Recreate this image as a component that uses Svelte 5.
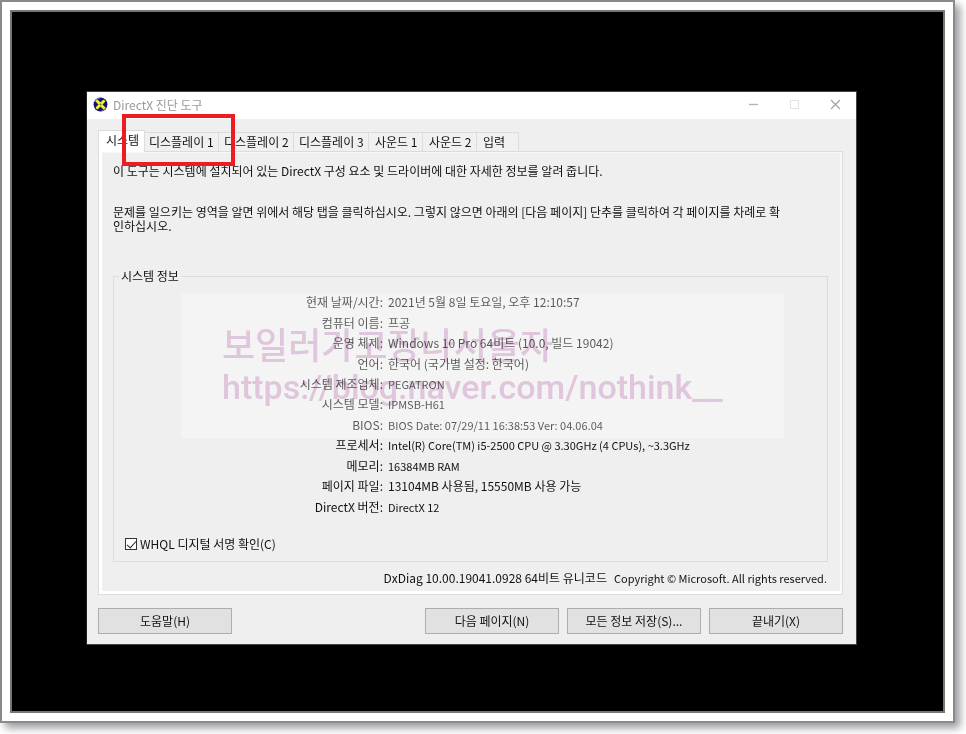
<script>
  const tabs = ['시스템', '디스플레이 1', '디스플레이 2', '디스플레이 3', '사운드 1', '사운드 2', '입력'];
  let active = $state(0);
  let whql = $state(true);
  const info = [
    ['현재 날짜/시간:', '2021년 5월 8일 토요일, 오후 12:10:57'],
    ['컴퓨터 이름:', '프공'],
    ['운영 체제:', 'Windows 10 Pro 64비트 (10.0, 빌드 19042)'],
    ['언어:', '한국어 (국가별 설정: 한국어)'],
    ['시스템 제조업체:', 'PEGATRON'],
    ['시스템 모델:', 'IPMSB-H61'],
    ['BIOS:', 'BIOS Date: 07/29/11 16:38:53 Ver: 04.06.04'],
    ['프로세서:', 'Intel(R) Core(TM) i5-2500 CPU @ 3.30GHz (4 CPUs), ~3.3GHz'],
    ['메모리:', '16384MB RAM'],
    ['페이지 파일:', '13104MB 사용됨, 15550MB 사용 가능'],
    ['DirectX 버전:', 'DirectX 12']
  ];
  const isLatin = (text) => !/[가-힣]/.test(text);
</script>

<div class="page">
  <div class="frame">
    <div class="desktop">
      <main class="window">
        <header class="titlebar">
          <svg class="logo" viewBox="0 0 16 16" aria-hidden="true">
            <circle cx="8" cy="8" r="7.4" fill="#10108c" />
            <path d="M2 5A7 7 0 0 1 7 1" stroke="#7f8fd8" stroke-width="1.2" fill="none" />
            <path d="M14 11A7 7 0 0 1 9 15" stroke="#6a6a9a" stroke-width="1.2" fill="none" />
            <path d="M4.6 4.6L11.4 11.4M11.4 4.6L4.6 11.4" stroke="#f5ee1c" stroke-width="3.2" stroke-linecap="round" />
            <circle cx="8" cy="8" r="1" fill="#77751c" />
          </svg>
          <h1>DirectX 진단 도구</h1>
          <div class="controls">
            <button aria-label="최소화"><svg viewBox="0 0 11 11"><path d="M1 5.5H10" stroke="#b4b4b4" stroke-width="1.4" /></svg></button>
            <button aria-label="최대화" disabled><svg viewBox="0 0 11 11"><path d="M1.5 1.5H9.500V9.500H1.500Z" stroke="#e2e2e2" fill="none" /></svg></button>
            <button aria-label="닫기"><svg viewBox="0 0 11 11"><path d="M1 1L10 10M10 1L1 10" stroke="#a0a0a0" stroke-width="1.1" /></svg></button>
          </div>
        </header>

        <div class="body">
          <div class="tabs" role="tablist">
            {#each tabs as tab, i}
              <button role="tab" aria-selected={i === active} class:active={i === active} onclick={() => (active = i)}>{tab}</button>
            {/each}
            <span class="marker"></span>
          </div>

          <section class="panel">
            <p class="intro">이 도구는 시스템에 설치되어 있는 DirectX 구성 요소 및 드라이버에 대한 자세한 정보를 알려 줍니다.</p>
            <p class="hint">문제를 일으키는 영역을 알면 위에서 해당 탭을 클릭하십시오. 그렇지 않으면 아래의 [다음 페이지] 단추를 클릭하여 각 페이지를 차례로 확인하십시오.</p>

            <fieldset>
              <legend>시스템 정보</legend>
              <dl>
                {#each info as [name, value]}
                  <dt>{name}</dt>
                  <dd class:latin={isLatin(value)}>{value}</dd>
                {/each}
              </dl>
              <label><input type="checkbox" bind:checked={whql} />WHQL 디지털 서명 확인(C)</label>
              <div class="veil"></div>
              <div class="watermark"><span>보일러가고장나서울자</span><span class="url">https://blog.naver.com/nothink__</span></div>
            </fieldset>

            <p class="version"><span>DxDiag 10.00.19041.0928 64비트 유니코드</span><span class="latin">Copyright © Microsoft. All rights reserved.</span></p>
          </section>

          <footer>
            <button class="help">도움말(H)</button>
            <button>다음 페이지(N)</button>
            <button>모든 정보 저장(S)...</button>
            <button>끝내기(X)</button>
          </footer>
        </div>
      </main>
    </div>
  </div>
</div>

<style>
  :global(body) {
    background: #fff;
  }
  .page {
    padding: 0 11px 12px 0;
    font: 12px/14px 'Noto Sans CJK KR', sans-serif;
    color: #111;
  }
  .page * {
    box-sizing: border-box;
  }
  .frame {
    border: 2px solid #8a8a8a;
    padding: 8px;
    background: #fff;
    box-shadow: 5px 5px 8px rgba(0, 0, 20, 0.4);
  }
  .desktop {
    border: 2px solid #777;
    background: #000;
    padding: 79px 86px 66px 74px;
  }
  .window {
    background: #efefef;
    border: 1px solid #444;
    border-left-color: #222;
  }
  .titlebar {
    display: flex;
    align-items: center;
    height: 27px;
    background: #fff;
    padding-left: 6px;
  }
  .logo {
    width: 15px;
    height: 15px;
    margin-bottom: 2px;
  }
  h1 {
    margin: 0 auto 2px 5px;
    font-size: 12px;
    font-weight: 400;
    color: #999;
  }
  button {
    font: inherit;
    color: inherit;
    border-radius: 0;
    padding: 0;
  }
  .controls {
    display: flex;
  }
  .controls button {
    width: 41px;
    height: 27px;
    padding-bottom: 2px;
    border: 0;
    background: none;
    display: grid;
    place-items: center;
  }
  .controls svg {
    width: 11px;
    height: 11px;
  }
  .body {
    padding: 11px 13px 10px 11px;
  }
  .tabs {
    position: relative;
    display: flex;
    align-items: flex-end;
    height: 21px;
    padding-left: 46px;
  }
  .tabs button {
    height: 19px;
    width: 54px;
    border: 1px solid #dcdcdc;
    border-width: 1px 1px 0 0;
    background: #f0f0f0;
    text-align: left;
    padding-left: 6px;
    white-space: nowrap;
  }
  .tabs button:nth-child(-n + 4) {
    width: 75px;
    padding-left: 5px;
  }
  .tabs button:nth-child(7) {
    width: 42px;
  }
  .tabs button.active {
    width: 47px;
    height: 22px;
    margin: 0 -1px -1px -46px;
    padding: 0 0 4px 7px;
    border-left-width: 1px;
    background: #fff;
    position: relative;
  }
  .marker {
    position: absolute;
    left: 24px;
    top: -16px;
    width: 113px;
    height: 52px;
    border: 4px solid #ed1c24;
    pointer-events: none;
  }
  .panel {
    border: 1px solid #dcdcdc;
    box-shadow: inset 3px -3px #fff, inset -2px 1px #f8f8f8;
    padding: 12px 14px 9px;
  }
  p {
    margin: 0;
  }
  .latin {
    font-size: 11px;
  }
  .hint {
    margin-top: 27px;
    height: 28px;
    padding-right: 40px;
    word-break: break-all;
  }
  fieldset {
    position: relative;
    margin: 36px 0 0;
    border: 1px solid #dcdcdc;
    padding: 9px 11px 10px;
    min-width: 0;
  }
  legend {
    padding: 0 2px;
    margin-left: -6px;
  }
  dl {
    display: grid;
    grid-template-columns: 258px 1fr;
    column-gap: 5px;
    grid-auto-rows: 1fr;
    align-items: center;
    height: 225px;
    margin: 0;
  }
  dt {
    text-align: right;
  }
  dd {
    margin: 0;
  }
  label {
    display: flex;
    align-items: center;
    gap: 3px;
    margin-top: 20px;
  }
  input {
    appearance: none;
    position: relative;
    width: 12px;
    height: 12px;
    margin: 0;
    border: 1px solid #333;
    background: #fff;
  }
  input:checked::after {
    content: '';
    position: absolute;
    left: 3px;
    top: 0;
    width: 4px;
    height: 8px;
    border: solid #222;
    border-width: 0 1px 1px 0;
    transform: rotate(42deg);
  }
  .veil {
    position: absolute;
    left: 67px;
    right: 43px;
    top: 10px;
    height: 145px;
    background: rgba(255, 255, 255, 0.3);
    pointer-events: none;
  }
  .watermark {
    position: absolute;
    left: 108px;
    top: 38px;
    display: flex;
    flex-direction: column;
    font-size: 34px;
    line-height: 44px;
    font-weight: 500;
    color: #eacfe6;
    mix-blend-mode: multiply;
    white-space: nowrap;
    pointer-events: none;
  }
  .watermark span:first-child {
    font-size: 36px;
  }
  .url {
    font-family: Roboto, sans-serif;
  }
  .version {
    display: flex;
    justify-content: flex-end;
    gap: 7px;
    margin-top: 9px;
    padding-right: 1px;
  }
  footer {
    display: flex;
    gap: 8px;
    margin-top: 13px;
  }
  footer button {
    width: 134px;
    height: 26px;
    border: 1px solid #adadad;
    background: #e1e1e1;
  }
  .help {
    margin-right: auto;
  }
</style>
